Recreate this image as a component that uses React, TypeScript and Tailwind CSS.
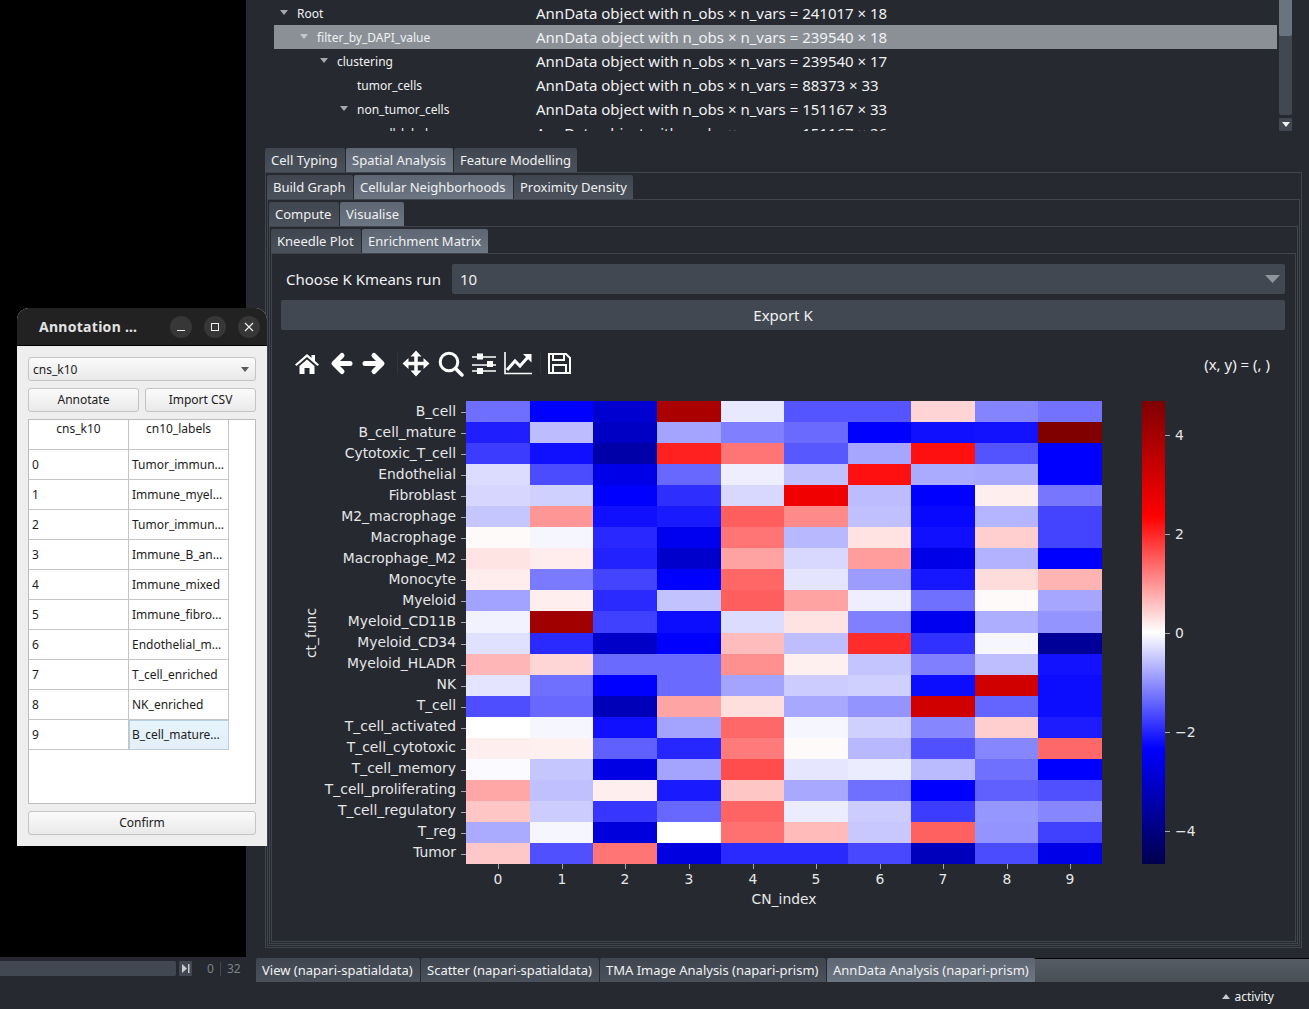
import React from "react";

const rowsData: [string, string[]][] = [
  ["B_cell", ["#6e6eff","#0000ff","#0000d0","#aa0000","#e8e8ff","#5555ff","#5555ff","#ffd4d4","#8484ff","#7272ff"]],
  ["B_cell_mature", ["#1e1eff","#bcbcff","#0000c4","#a4a4ff","#8080ff","#6a6aff","#0000ff","#1010ff","#1212ff","#800000"]],
  ["Cytotoxic_T_cell", ["#3c3cff","#1010ff","#0000a8","#ff2020","#ff7474","#5858ff","#a6a6ff","#ff1010","#5454ff","#0000ff"]],
  ["Endothelial", ["#dcdcff","#4c4cff","#0000e8","#6868ff","#eeeeff","#c0c0ff","#ff1010","#aaaaff","#a8a8ff","#0000ff"]],
  ["Fibroblast", ["#d6d6ff","#d0d0ff","#0000ff","#2e2eff","#d8d8ff","#f00000","#bcbcff","#0000ff","#ffeeee","#7676ff"]],
  ["M2_macrophage", ["#c6c6ff","#ff9696","#1010ff","#1a1aff","#ff5e5e","#ff8a8a","#c0c0ff","#0808ff","#b4b4ff","#4444ff"]],
  ["Macrophage", ["#fffafa","#f6f6ff","#2828ff","#0000f0","#ff7474","#b8b8ff","#ffe2e2","#1010ff","#ffcece","#4444ff"]],
  ["Macrophage_M2", ["#ffe4e4","#ffecec","#2222ff","#0000cc","#ffa2a2","#d8d8ff","#ff9c9c","#0000e8","#b2b2ff","#0000ff"]],
  ["Monocyte", ["#ffecec","#7a7aff","#4444ff","#0000ff","#ff6666","#e4e4ff","#9c9cff","#1616ff","#ffdcdc","#ffb4b4"]],
  ["Myeloid", ["#a2a2ff","#ffeeee","#2a2aff","#c2c2ff","#ff5e5e","#ffa2a2","#eeeeff","#7070ff","#fffafa","#a6a6ff"]],
  ["Myeloid_CD11B", ["#f2f2ff","#a00000","#4040ff","#0c0cff","#dcdcff","#ffe2e2","#8080ff","#0000f0","#aeaeff","#9494ff"]],
  ["Myeloid_CD34", ["#e0e0ff","#2a2aff","#0000c8","#0000ff","#ffbcbc","#bebeff","#ff2c2c","#3030ff","#f6f6ff","#000098"]],
  ["Myeloid_HLADR", ["#ffb6b6","#ffd6d6","#6a6aff","#6a6aff","#ff9090","#fff0f0","#c4c4ff","#8080ff","#bebeff","#1212ff"]],
  ["NK", ["#e4e4ff","#7070ff","#0000ff","#6a6aff","#a4a4ff","#ccccff","#d0d0ff","#0c0cff","#d00000","#0c0cff"]],
  ["T_cell", ["#4e4eff","#6868ff","#0000b8","#ffa4a4","#ffdede","#a8a8ff","#9494ff","#d00000","#6464ff","#0c0cff"]],
  ["T_cell_activated", ["#ffffff","#f6f6ff","#1010ff","#a4a4ff","#ff6868","#f6f6ff","#d0d0ff","#8686ff","#ffcece","#1c1cff"]],
  ["T_cell_cytotoxic", ["#ffeeee","#fff0f0","#6060ff","#2626ff","#ff7a7a","#fffafa","#b8b8ff","#5050ff","#8686ff","#ff6868"]],
  ["T_cell_memory", ["#fafaff","#c6c6ff","#0000e4","#a4a4ff","#ff4c4c","#e6e6ff","#ececff","#babaff","#7070ff","#0000ff"]],
  ["T_cell_proliferating", ["#ffa6a6","#c0c0ff","#ffeeee","#1a1aff","#ffc6c6","#a8a8ff","#7070ff","#0000ff","#6060ff","#5050ff"]],
  ["T_cell_regulatory", ["#ffc6c6","#ccccff","#3636ff","#6868ff","#ff6464","#ececff","#ccccff","#3c3cff","#9696ff","#8686ff"]],
  ["T_reg", ["#aaaaff","#f6f6ff","#0000dc","#ffffff","#ff7070","#ffbaba","#c8c8ff","#ff6060","#9494ff","#4040ff"]],
  ["Tumor", ["#ffc8c8","#5050ff","#ff7474","#0000e0","#2a2aff","#2a2aff","#4848ff","#0000bc","#4c4cff","#0000e8"]],
];
const colX = [466, 530, 593, 657, 721, 784, 848, 911, 975, 1038, 1102];
const rowY = (i: number) => Math.round(401 + (i * 463) / 22);
const cbTicks: [string, number][] = [["4", 435], ["2", 534], ["0", 633], ["−2", 732], ["−4", 831]];
const FS = 13.89;

function Chart() {
  const ox = 281;
  const oy = 392;
  return (
    <svg width={1004} height={530} viewBox={`${ox} ${oy} 1004 530`} className="block shrink-0" style={{ fontFamily: '"DejaVu Sans", sans-serif' }}>
      {rowsData.map(([name, cells], r) => (
        <g key={name}>
          {cells.map((c, i) => (
            <rect key={i} x={colX[i]} y={rowY(r)} width={colX[i + 1] - colX[i]} height={rowY(r + 1) - rowY(r)} fill={c} shapeRendering="crispEdges" />
          ))}
          <rect x={461} y={Math.round((rowY(r) + rowY(r + 1)) / 2)} width={5} height={1} fill="#a6a9ad" shapeRendering="crispEdges" />
          <text x={456} y={416 + 21 * r} textAnchor="end" fontSize={FS} fill="#e6e7e8">{name}</text>
        </g>
      ))}
      {Array.from({ length: 10 }, (_, i) => {
        const x = Math.round((colX[i] + colX[i + 1]) / 2);
        return (
          <g key={i}>
            <rect x={x} y={864} width={1} height={5} fill="#a6a9ad" shapeRendering="crispEdges" />
            <text x={x} y={884} textAnchor="middle" fontSize={FS} fill="#e6e7e8">{i}</text>
          </g>
        );
      })}
      <text x={784} y={904} textAnchor="middle" fontSize={FS} fill="#e6e7e8">CN_index</text>
      <text x={316} y={633} textAnchor="middle" fontSize={FS} fill="#e6e7e8" transform="rotate(-90 316 633)">ct_func</text>
      <defs>
        <linearGradient id="seismic" x1="0" y1="0" x2="0" y2="1">
          <stop offset="0" stopColor="#7f0000" />
          <stop offset="0.25" stopColor="#ff0000" />
          <stop offset="0.5" stopColor="#ffffff" />
          <stop offset="0.75" stopColor="#0000ff" />
          <stop offset="1" stopColor="#00004d" />
        </linearGradient>
      </defs>
      <rect x={1142} y={401} width={23} height={463} fill="url(#seismic)" shapeRendering="crispEdges" />
      {cbTicks.map(([t, y]) => (
        <g key={t}>
          <rect x={1165} y={y} width={5} height={1} fill="#a6a9ad" shapeRendering="crispEdges" />
          <text x={1175} y={y + 5} fontSize={FS} fill="#e6e7e8">{t}</text>
        </g>
      ))}
    </svg>
  );
}

function Tab({ label, active, w }: { label: string; active?: boolean; w: string }) {
  return (
    <div className={`${w} h-6 shrink-0 overflow-hidden rounded-t-[2px] pl-[6px] text-[13px] leading-6 whitespace-nowrap text-[#f0f1f2] ${active ? "bg-gradient-to-b from-[#5d6672] to-[#6c7582]" : "bg-gradient-to-b from-[#3f464f] to-[#4a515b]"}`}>
      {label}
    </div>
  );
}

function TabRow({ children }: { children: React.ReactNode }) {
  return <div className="flex gap-px">{children}</div>;
}

const treeRows: [number, boolean, string, string, boolean][] = [
  [23, true, "Root", "241017 × 18", false],
  [43, true, "filter_by_DAPI_value", "239540 × 18", true],
  [63, true, "clustering", "239540 × 17", false],
  [83, false, "tumor_cells", "88373 × 33", false],
  [83, true, "non_tumor_cells", "151167 × 33", false],
  [103, false, "cell_labels", "151167 × 26", false],
];

function Tree() {
  return (
    <div className="flex h-[131px] shrink-0">
      <div className="ml-[28px] w-[1003px] overflow-hidden pt-px">
        {treeRows.map(([ind, open, name, val, sel]) => (
          <div key={name} className={`flex h-6 items-center ${sel ? "bg-[#8b9097]" : ""}`}>
            <div className="relative w-[262px] shrink-0 text-[12px] whitespace-nowrap text-[#f0f1f2]" style={{ paddingLeft: ind }}>
              {open && (
                <svg width="8" height="5" viewBox="0 0 8 5" className="absolute top-[6px]" style={{ left: ind - 17 }}>
                  <path d="M0 0h8L4 5z" fill={sel ? "#c4c7cb" : "#a6a9ad"} />
                </svg>
              )}
              <span className="relative top-px">{name}</span>
            </div>
            <div className="text-[15px] whitespace-nowrap text-[#f0f1f2]">AnnData object with n_obs × n_vars = {val}</div>
          </div>
        ))}
      </div>
      <div className="ml-[2px] flex w-[13px] flex-col gap-[3px]">
        <div className="h-[115px] rounded-b-[2px] bg-[#414851]">
          <div className="h-[36px] rounded-b-[2px] bg-[#6a7380]" />
        </div>
        <div className="flex h-[13px] items-center justify-center rounded-[1px] bg-[#414851]">
          <svg width="8" height="5" viewBox="0 0 8 5"><path d="M0 0h8L4 5z" fill="#f0f1f2" /></svg>
        </div>
      </div>
    </div>
  );
}

function Toolbar() {
  const c = "#ffffff";
  return (
    <div className="flex h-[62px] items-start justify-between pt-[20px] pr-[14px] pl-[9px]">
      <svg width="290" height="28" viewBox="290 350 290 28" fill="none" stroke={c}>
        <path d="M295 364.5 L307 354 L311.5 358 V355 H315 V361 L319 364.5 L317.5 366 L307 357 L296.5 366 Z" fill={c} stroke="none" />
        <path d="M299.5 366 L307 359.5 L314.5 366 V374 H309.5 V368 H304.5 V374 H299.5 Z" fill={c} stroke="none" />
        <path d="M350 363.5H335M342 355.5L334 363.5L342 371.5" strokeWidth="5" strokeLinecap="round" strokeLinejoin="round" />
        <path d="M365 363.5H381M374 355.5L382 363.5L374 371.5" strokeWidth="5" strokeLinecap="round" strokeLinejoin="round" />
        <rect x="397" y="353" width="1" height="21" fill="#30343b" stroke="none" />
        <path d="M416 354V373M406 363.5H426" strokeWidth="3.5" />
        <path d="M416 350.5l5.5 6h-11zM416 376.5l5.5-6h-11zM402.5 363.5l6-5.5v11zM429.5 363.5l-6-5.5v11z" fill={c} stroke="none" />
        <circle cx="449" cy="362" r="8.8" strokeWidth="3" />
        <path d="M455.5 368.5L462 375" strokeWidth="3.5" strokeLinecap="round" />
        <path d="M472 357H496M472 365H496M472 371H496" strokeWidth="1.6" />
        <rect x="477" y="353.5" width="6" height="6" fill={c} stroke="none" />
        <rect x="487" y="361" width="6" height="6" fill={c} stroke="none" />
        <rect x="477" y="368" width="6" height="6" fill={c} stroke="none" />
        <path d="M505 352V373.5H532" strokeWidth="1.6" />
        <path d="M507 370L515 361L520 366L528 357" strokeWidth="3" />
        <path d="M523 354H531.5V362.5Z" fill={c} stroke="none" />
        <rect x="540" y="353" width="1" height="21" fill="#30343b" stroke="none" />
        <path d="M549 354H566L570 358V373H549Z" strokeWidth="2" />
        <path d="M553 354V360H564V354" strokeWidth="2" />
        <rect x="553" y="365" width="13" height="8" strokeWidth="2" />
      </svg>
      <div className="pt-[3px] pr-px text-[15px] text-[#f0f1f2]">(x, y) = (, )</div>
    </div>
  );
}

function Panel({ children, cls }: { children: React.ReactNode; cls: string }) {
  return <div className={`flex min-h-0 flex-1 flex-col border border-[#3f444d] ${cls}`}>{children}</div>;
}

const annRows = [
  "Tumor_immun…","Immune_myel…","Tumor_immun…","Immune_B_an…","Immune_mixed","Immune_fibro…","Endothelial_m…","T_cell_enriched","NK_enriched","B_cell_mature…",
];

function QBtn({ label, cls }: { label: string; cls: string }) {
  return (
    <div className={`flex h-6 items-center justify-center rounded-[3px] border border-[#c4c4c4] bg-gradient-to-b from-[#fbfbfb] to-[#e9e9e9] text-[12px] text-[#202020] ${cls}`}>{label}</div>
  );
}

function AnnotationWindow() {
  return (
    <div className="absolute top-[308px] left-[17px] z-10 w-[250px] overflow-hidden rounded-t-[12px] bg-[#eeeeee] text-[12px] text-[#1c1c1c]" style={{ fontFamily: '"Noto Sans", sans-serif' }}>
      <div className="flex h-[38px] items-center border-b border-black bg-[#222222] pr-[7px] pl-[22px]">
        <div className="flex-1 text-[14px] font-bold tracking-[0.02em] text-[#e4e4e4]">Annotation …</div>
        <div className="flex gap-[12px]">
          <div className="flex h-[22px] w-[22px] items-center justify-center rounded-full bg-[#373737]">
            <svg width="10" height="10" viewBox="0 0 10 10"><path d="M1 8.5H9" stroke="#eee" strokeWidth="1" /></svg>
          </div>
          <div className="flex h-[22px] w-[22px] items-center justify-center rounded-full bg-[#373737]">
            <svg width="10" height="10" viewBox="0 0 10 10"><rect x="1.5" y="1.5" width="7" height="7" stroke="#eee" strokeWidth="1" fill="none" /></svg>
          </div>
          <div className="flex h-[22px] w-[22px] items-center justify-center rounded-full bg-[#373737]">
            <svg width="10" height="10" viewBox="0 0 10 10"><path d="M1 1L9 9M9 1L1 9" stroke="#eee" strokeWidth="1.2" /></svg>
          </div>
        </div>
      </div>
      <div className="flex flex-col gap-[7px] px-[11px] pt-[11px] pb-[11px]">
        <div className="flex h-6 items-center justify-between rounded-[3px] border border-[#c4c4c4] bg-gradient-to-b from-[#fbfbfb] to-[#e9e9e9] pr-[6px] pl-[4px]">
          <span className="pt-px">cns_k10</span>
          <svg width="8" height="5" viewBox="0 0 8 5"><path d="M0 0h8L4 5z" fill="#5c5c5c" /></svg>
        </div>
        <div className="flex gap-[6px]">
          <QBtn label="Annotate" cls="flex-1" />
          <QBtn label="Import CSV" cls="flex-1" />
        </div>
        <div className="h-[385px] border border-[#bdbdbd] bg-white">
          <div className="grid w-[200px] grid-cols-[100px_100px]">
            <div className="h-[30px] border-r border-b border-[#c4c4c4] text-center">cns_k10</div>
            <div className="h-[30px] border-r border-b border-[#c4c4c4] text-center">cn10_labels</div>
            {annRows.map((l, i) => (
              <React.Fragment key={i}>
                <div className="flex h-[30px] items-center border-r border-b border-[#c4c4c4] pl-[3px]">{i}</div>
                <div className={`flex h-[30px] items-center border-r border-b border-[#c4c4c4] pl-[3px] ${i === 9 ? "bg-gradient-to-b from-[#e6f4fc] to-[#e4eff7] outline outline-1 -outline-offset-1 outline-[#b8cfe0]" : ""}`}>{l}</div>
              </React.Fragment>
            ))}
          </div>
        </div>
        <QBtn label="Confirm" cls="w-full" />
      </div>
    </div>
  );
}

export default function App() {
  return (
    <div className="relative flex h-[1009px] w-[1309px] flex-col overflow-hidden bg-[#262930] text-[#f0f1f2]" style={{ fontFamily: '"Noto Sans", sans-serif' }}>
      <AnnotationWindow />
      <div className="flex h-[957px] shrink-0">
        <div className="w-[246px] shrink-0 bg-black" />
        <div className="flex min-w-0 flex-1 flex-col">
          <Tree />
          <div className="flex min-h-0 flex-1 flex-col pt-[17px] pr-[7px] pb-[9px] pl-[19px]">
            <TabRow>
              <Tab w="w-[80px]" label="Cell Typing" />
              <Tab w="w-[107px]" active label="Spatial Analysis" />
              <Tab w="w-[123px]" label="Feature Modelling" />
            </TabRow>
            <Panel cls="px-px pt-[2px] pb-px">
              <TabRow>
                <Tab w="w-[86px]" label="Build Graph" />
                <Tab w="w-[159px]" active label="Cellular Neighborhoods" />
                <Tab w="w-[119px]" label="Proximity Density" />
              </TabRow>
              <Panel cls="px-px pt-[2px] pb-px">
                <TabRow>
                  <Tab w="w-[70px]" label="Compute" />
                  <Tab w="w-[64px]" active label="Visualise" />
                </TabRow>
                <Panel cls="px-px pt-[2px] pb-px">
                  <TabRow>
                    <Tab w="w-[90px]" label="Kneedle Plot" />
                    <Tab w="w-[126px]" active label="Enrichment Matrix" />
                  </TabRow>
                  <Panel cls="pt-[10px] pr-[10px] pl-[9px]">
                    <div className="flex h-[30px] items-center">
                      <div className="w-[171px] pl-[5px] text-[15px] whitespace-nowrap">Choose K Kmeans run</div>
                      <div className="flex h-[30px] flex-1 items-center justify-between rounded-[2px] bg-[#414851] pr-[5px] pl-[8px] text-[15px]">
                        <span>10</span>
                        <svg width="15" height="8" viewBox="0 0 15 8"><path d="M0 0h15L7.5 8z" fill="#8e959d" /></svg>
                      </div>
                    </div>
                    <div className="mt-[6px] flex h-[30px] items-center justify-center rounded-[2px] bg-[#414851] text-[15px]">Export K</div>
                    <Toolbar />
                    <Chart />
                  </Panel>
                </Panel>
              </Panel>
            </Panel>
          </div>
        </div>
      </div>
      <div className="flex h-[25px] shrink-0 items-start bg-[#262930]">
        <div className="mt-[4px] flex h-[15px] w-[192px] shrink-0 items-center">
          <div className="h-[15px] w-[176px] rounded-r-[2px] bg-[#414851]" />
          <div className="ml-[3px] flex h-[15px] w-[13px] items-center justify-center rounded-[1px] bg-[#414851]">
            <svg width="9" height="9" viewBox="0 0 9 9"><path d="M1 0L6 4.5L1 9z M7 0h1.5v9H7z" fill="#c8ccd0" /></svg>
          </div>
        </div>
        <div className="mt-[3px] flex w-[64px] shrink-0 items-center text-[12px] text-[#7c838b]">
          <span className="ml-[15px]">0</span>
          <span className="mx-[6px] h-[14px] w-px bg-[#414851]" />
          <span>32</span>
        </div>
        <div className="mt-px flex flex-1 gap-px">
          <Tab w="w-[164px]" label="View (napari-spatialdata)" />
          <Tab w="w-[178px]" label="Scatter (napari-spatialdata)" />
          <Tab w="w-[226px]" label="TMA Image Analysis (napari-prism)" />
          <Tab w="w-[208px]" active label="AnnData Analysis (napari-prism)" />
          <div className="-ml-px h-6 flex-1 border-t border-black bg-gradient-to-b from-[#565c64] to-[#494f57]" />
        </div>
      </div>
      <div className="flex flex-1 items-center justify-end pt-[2px] pr-[35px] text-[12px] text-[#f0f1f2]">
        <svg width="8" height="5" viewBox="0 0 8 5" className="mr-[4px]"><path d="M0 5h8L4 0z" fill="#c8ccd0" /></svg>
        activity
      </div>
    </div>
  );
}
